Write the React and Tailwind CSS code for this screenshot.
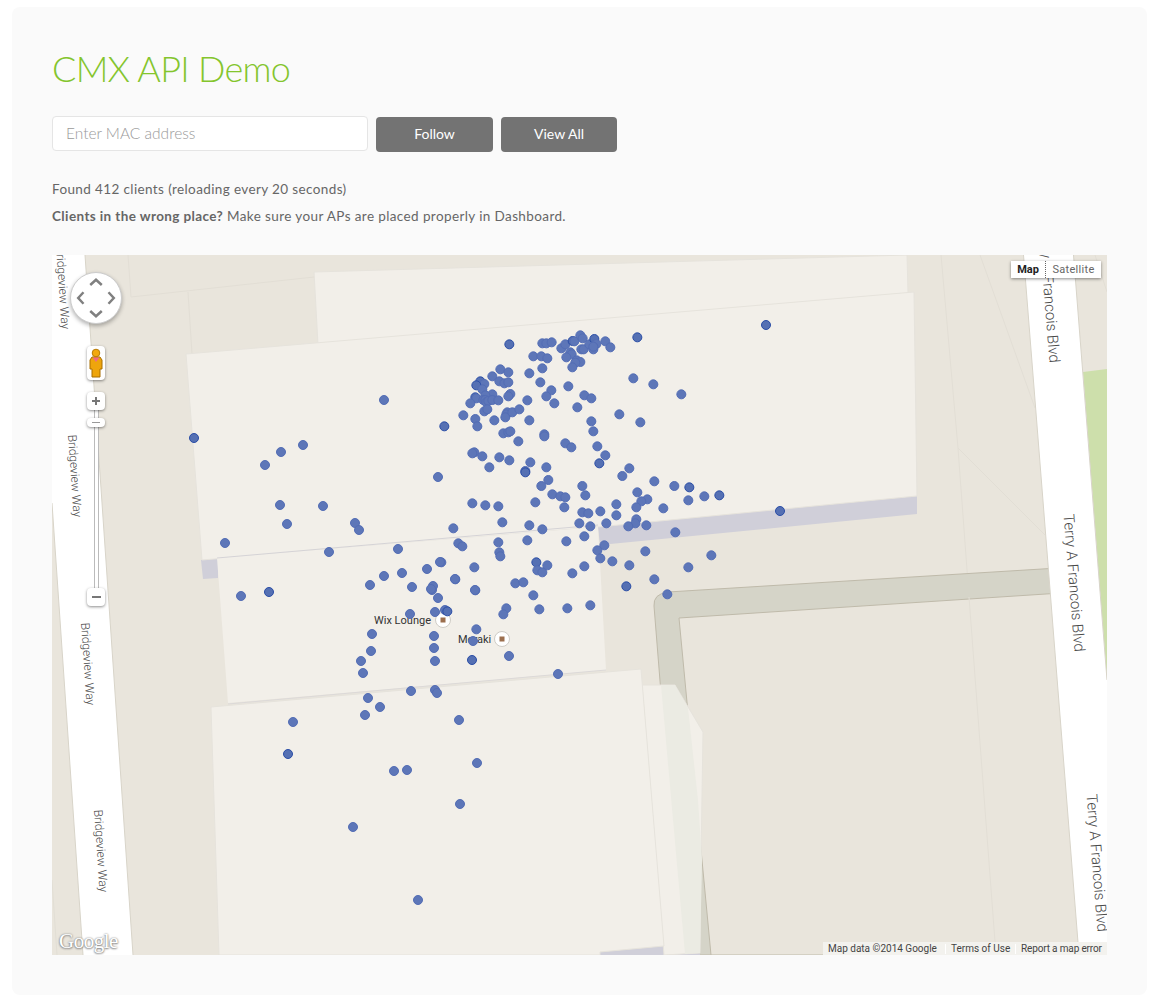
import React from 'react'

// marker positions read off the map; "at" shifts crop coords into page coords
const at = (ox, oy, pts) => pts.map(([x, y, s]) => [ox + x / 3, oy + y / 3, s])

const markers = [
  ...at(440, 320, [
    [208, 73, 1], [307, 70], [319, 70], [335, 67], [364, 85], [376, 73], [391, 97], [395, 103], [379, 112], [398, 63, 1], [403, 64], [421, 46], [428, 55], [424, 88], [431, 88], [448, 73], [463, 57, 1], [469, 72], [460, 88], [460, 80], [496, 64], [511, 82], [592, 52, 1],
    [280, 109], [304, 109], [322, 115], [410, 121], [421, 126], [406, 128], [397, 142], [307, 145], [268, 160],
    [181, 148], [205, 157], [157, 169], [121, 184, 1], [133, 192], [109, 196, 1], [178, 184], [193, 190], [205, 187], [127, 208], [301, 187], [385, 199], [334, 211], [319, 229], [157, 223], [211, 222], [205, 229], [136, 226], [106, 232, 1], [109, 235], [130, 240], [136, 240], [139, 247], [145, 243], [157, 240], [175, 241], [91, 250], [262, 241], [343, 250], [433, 226], [454, 235], [412, 262], [580, 175], [640, 193], [724, 223],
    [70, 286], [106, 297], [112, 319], [163, 301], [133, 274], [142, 268], [202, 277], [199, 283], [196, 292], [217, 277], [238, 268], [268, 301], [13, 319, 1],
    [190, 340], [205, 337], [211, 334], [313, 343], [313, 349], [235, 364], [376, 370], [394, 382], [472, 379], [496, 406], [478, 430, 1], [454, 304], [460, 334], [538, 283], [601, 307],
    [103, 397], [97, 400], [127, 409], [178, 412], [208, 421], [271, 427], [148, 442], [319, 442], [256, 453], [256, 457, 1], [568, 445],
  ]),
  ...at(440, 470, [
    [547, 18], [325, 30], [643, 34], [304, 48], [427, 48], [703, 48], [748, 52, 1], [592, 67], [337, 73], [361, 79], [376, 82], [436, 76], [622, 88], [604, 94], [745, 91], [793, 79], [838, 76, 1], [97, 100], [136, 106], [175, 109], [286, 97], [373, 112], [529, 103], [589, 112], [670, 115], [427, 127], [445, 130], [481, 124], [529, 136], [187, 157], [418, 160], [499, 160], [589, 148], [586, 160], [565, 169], [619, 166], [451, 169], [268, 166], [307, 178], [40, 175], [706, 187], [433, 199], [262, 211], [175, 217], [379, 214], [55, 220], [67, 229], [493, 226], [472, 241], [616, 244], [178, 247], [181, 259], [481, 265], [517, 274], [814, 256], [4, 277], [289, 277, 1], [292, 301], [307, 307], [322, 286], [433, 289], [568, 286], [103, 292], [745, 292], [397, 310], [46, 328], [226, 340], [250, 337], [643, 328], [559, 349, 1], [106, 361], [280, 376], [682, 373], [199, 415], [190, 433], [298, 418], [382, 415], [451, 406], [15, 420], [22, 424, 1], [109, 478],
  ]),
  [475, 590], [438, 598], [432, 590], [412, 587], [410, 614], [435, 612], [473, 641], [372, 634], [371, 651], [434, 636], [434, 648], [435, 661], [472, 660, 1], [509, 656], [361, 661], [363, 673],
  [766, 325, 1], [384, 400], [194, 438, 1], [303, 445], [281, 452], [265, 465], [438, 477], [280, 505], [323, 506], [287, 524], [355, 523], [359, 530], [225, 543], [329, 552], [398, 549], [440, 562], [427, 569], [402, 573], [384, 576], [370, 585], [433, 586], [431, 589], [455, 579], [241, 596], [269, 592, 1], [780, 511, 1],
  [558, 674], [411, 691], [435, 690], [437, 693], [368, 698], [380, 707], [365, 715], [293, 722], [459, 720], [288, 754, 1], [394, 771], [407, 770], [477, 763], [460, 804], [353, 827], [418, 900],
]

const roadLabels = [
  ['Bridgeview Way', 62, 288, 86.1, 12],
  ['Bridgeview Way', 74, 476, 86.1, 12],
  ['Bridgeview Way', 87, 664, 86.1, 12],
  ['Bridgeview Way', 100, 851, 86.1, 12],
  ['Terry A Francois Blvd', 1048, 294, 85.4, 15],
  ['Terry A Francois Blvd', 1073, 583, 85.4, 15],
  ['Terry A Francois Blvd', 1096, 863, 85.4, 15],
]

const MapCanvas = () => (
  <svg viewBox="52 255 1055 700" className="block w-full h-full font-[Roboto,sans-serif]">
    <rect x="52" y="255" width="1055" height="700" fill="#e9e5dc" />

    {/* faint parcel lines */}
    <g stroke="#e2ded5" fill="none" strokeWidth="1">
      <path d="M57 955 L52 880" />
      <path d="M128 255 L131 297 L314 277" />
      <path d="M188 292 L192 354" />
      <path d="M980 255 L1035 408" />
      <path d="M941 255 L958 448 L969 597" />
      <path d="M958 448 L1045 535" />
      <path d="M1095 255 L1107 292" />
    </g>

    {/* parking structure */}
    <path d="M668 592 L1107 565 L1107 955 L682 955 L654 606 Q653 594 668 592 Z" fill="#d5d4c8" stroke="#bfbaaa" />
    <polygon points="679,618 1107,590 1107,955 711,955" fill="#e9e5dc" stroke="#bfbaaa" />
    <path d="M969 597 L996 955" stroke="#e2ded5" fill="none" />

    {/* roads */}
    <polygon points="52,255 85,255 133,955 83,955 52,503" fill="#fff" />
    <path d="M85 255 L133 955" stroke="#d8d4c9" fill="none" />
    <path d="M52 503 L83 955" stroke="#d8d4c9" fill="none" />
    <polygon points="1083,372 1107,369 1107,680" fill="#cddfab" />
    <polygon points="1023.500,255 1073.500,255 1107,680 1107,955 1079,955" fill="#fff" />
    <path d="M1023.500 255 L1079 955" stroke="#d8d4c9" fill="none" />
    <path d="M1073.500 255 L1107 680" stroke="#d8d4c9" fill="none" />

    {/* building shadows */}
    <polygon points="598,527 917,496 917,514 600,545" fill="#d0cfd9" />
    <polygon points="201,560 218,558 218,578 203,579" fill="#d0cfd9" />
    <polygon points="600,952 664,946 700,953 700,955 600,955" fill="#d0cfd9" />

    {/* buildings */}
    <polygon points="314,272 907,255 908,293 318,345" fill="#f2efe9" stroke="#e6e3dc" />
    <polygon points="186,354 914,292 917,496 598,527 202,560" fill="#f2efe9" stroke="#e6e3dc" />
    <polygon points="217,558 598,527 606,670 228,703" fill="#f2efe9" />
    <path d="M217 558 L598 525" stroke="#d5d3d6" fill="none" />
    <path d="M228 704 L606 670" stroke="#dcd9d8" fill="none" />
    <polygon points="642,685 675,685 703,732 701,860 700,953 664,955" fill="#f2efe9" stroke="#e6e3dc" />
    <polygon points="661,685 675,685 688,708 698,800 702,860 700,953 685,954" fill="#ebebe3" />
    <polygon points="211,707 641,669 664,946 600,952 600,955 219,955" fill="#f2efe9" stroke="#e6e3dc" />

    {/* road names */}
    <g fill="#4a4a4a" fontWeight="300">
      {roadLabels.map(([text, x, y, angle, size]) => (
        <text key={`${text}-${y}`} x={x} y={y} fontSize={size} textAnchor="middle" dominantBaseline="middle" transform={`rotate(${angle} ${x} ${y})`}>{text}</text>
      ))}
    </g>

    {/* places */}
    <g fontSize="11" fill="#333">
      <text x="374" y="624">Wix Lounge</text>
      <text x="458" y="643">Meraki</text>
    </g>
    {[[443, 620], [502, 639]].map(([x, y]) => (
      <g key={x}>
        <circle cx={x} cy={y} r="7.5" fill="#fff" stroke="#cfccc6" />
        <rect x={x - 2.5} y={y - 2.5} width="5" height="5" fill="#9c6f4e" />
      </g>
    ))}

    {/* clients */}
    {markers.map(([x, y, strong], i) => (
      <circle
        key={i}
        cx={x}
        cy={y}
        r="4.5"
        fill={strong ? '#5570b3' : '#5d76b8'}
        stroke={strong ? '#2a4da6' : '#536db5'}
        strokeWidth="1"
      />
    ))}
  </svg>
)

const PanControl = () => (
  <div className="absolute left-[18px] top-[17px] w-[52px] h-[52px] rounded-full bg-white border border-[#ccc] shadow-[0_2px_4px_rgba(0,0,0,0.3)]">
    <svg viewBox="0 0 52 52" className="block w-full h-full" fill="none" stroke="#808080" strokeWidth="2.6">
      <path d="M20 12.500 L26 7 L32 12.500" />
      <path d="M20 39.500 L26 45 L32 39.500" />
      <path d="M13 20 L7.500 26 L13 32" />
      <path d="M39 20 L44.500 26 L39 32" />
    </svg>
  </div>
)

const ZoomButton = ({ children, className }) => (
  <div className={`absolute left-[35px] w-[18px] flex items-center justify-center bg-white rounded-sm shadow-[0_1px_3px_rgba(0,0,0,0.45)] ${className}`}>
    {children}
  </div>
)

const Controls = () => (
  <>
    <PanControl />

    {/* pegman */}
    <ZoomButton className="top-[91px] h-[34px]">
      <svg width="14" height="30" viewBox="0 0 14 30">
        <path d="M3 9 H11 L13 12 V21 H11 V29 H3 V21 H1 V12 Z" fill="#eea50c" stroke="#a96f00" />
        <circle cx="7" cy="5" r="3.8" fill="#f2a90f" stroke="#b77a05" />
        <path d="M3.500 9.500 H10.500 L7 14 Z" fill="#ee6a88" />
      </svg>
    </ZoomButton>

    {/* zoom slider */}
    <div className="absolute left-[42px] top-[150px] w-[5px] h-[190px] bg-white border-x border-[#bbb]" />
    <ZoomButton className="top-[137px] h-[18px]">
      <svg width="10" height="10" viewBox="0 0 10 10" fill="#777"><path d="M4 1 H6 V4 H9 V6 H6 V9 H4 V6 H1 V4 H4 Z" /></svg>
    </ZoomButton>
    <ZoomButton className="top-[163px] h-[9px]">
      <span className="block w-[8px] h-px bg-[#999]" />
    </ZoomButton>
    <ZoomButton className="top-[333px] h-[18px]">
      <span className="block w-[9px] h-[2px] bg-[#777]" />
    </ZoomButton>

    {/* map type */}
    <div className="absolute right-[6px] top-[6px] h-[17px] w-[90px] flex items-center bg-white shadow-[0_1px_3px_rgba(0,0,0,0.45)] font-[Roboto,sans-serif] text-[11px] leading-none">
      <span className="w-[35px] h-full flex items-center justify-center font-bold text-[#222] border-r border-dotted border-[#666]">Map</span>
      <span className="flex-1 flex items-center justify-center text-[#666] tracking-[0.3px]">Satellite</span>
    </div>

    {/* google mark */}
    <span className="absolute left-[7px] bottom-[3px] font-['Liberation_Serif',serif] text-[21px] leading-none text-[#fff] tracking-[-0.5px] [text-shadow:0_0_2px_#777,0_1px_2px_#888]">Google</span>

    {/* attribution */}
    <div className="absolute right-0 bottom-0 h-[13px] w-[284px] flex items-center bg-[#f3f2ee] font-[Roboto,sans-serif] text-[10px] leading-none text-[#444] whitespace-nowrap">
      <span className="w-[122px] pl-[5px]">Map data ©2014 Google</span>
      <span className="w-[70px] pl-[5px] border-l border-white">Terms of Use</span>
      <span className="pl-[5px] border-l border-white tracking-[-0.15px]">Report a map error</span>
    </div>
  </>
)

const App = () => {
  return (
    <div className="bg-white pt-[7px] pl-3 pr-2 pb-[7px] font-[Lato,sans-serif]">
      <div className="h-[988px] rounded-lg bg-[#fafafa] px-10 pt-[38px]">
        <h1 className="text-[36px] leading-[46px] font-light text-[#84c52d] tracking-[-0.7px]">CMX API Demo</h1>

        <div className="mt-[24px] flex items-center gap-2">
          <input
            placeholder="Enter MAC address"
            className="w-[316px] h-[35px] px-[13px] pb-[2px] bg-white border border-[#e5e5e5] rounded-sm text-[15.5px] font-light placeholder:text-[#9a9a9a] outline-none"
          />
          <button className="w-[117px] h-[35px] mt-[2px] pb-[2px] rounded-sm bg-[#737373] text-white text-sm">Follow</button>
          <button className="w-[116px] h-[35px] mt-[2px] pb-[2px] rounded-sm bg-[#737373] text-white text-sm">View All</button>
        </div>

        <p className="mt-[28px] text-[13.5px] leading-[18px] text-[#666] tracking-[0.38px]">Found 412 clients (reloading every 20 seconds)</p>
        <p className="mt-[9px] text-[13.5px] leading-[18px] text-[#666] tracking-[0.39px]">
          <b>Clients in the wrong place?</b> Make sure your APs are placed properly in Dashboard.
        </p>

        <div className="relative mt-[30px] h-[700px] overflow-hidden">
          <MapCanvas />
          <Controls />
        </div>
      </div>
    </div>
  )
}

export default App
